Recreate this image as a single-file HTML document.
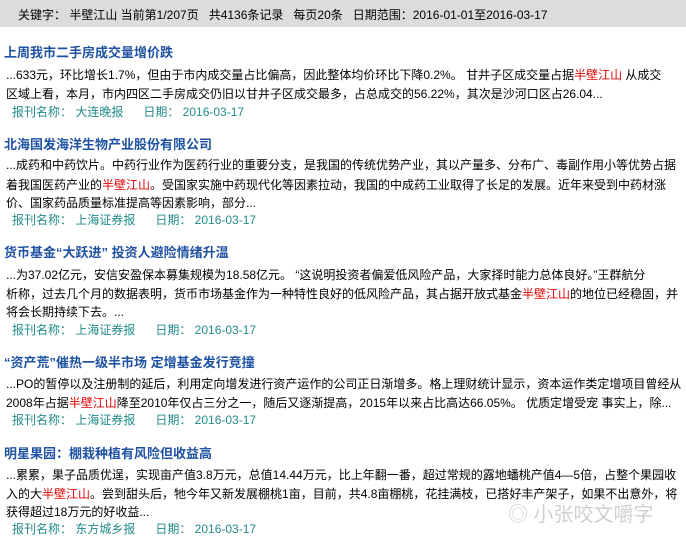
<!DOCTYPE html>
<html><head><meta charset="utf-8"><style>
body{margin:0;width:686px;height:536px;overflow:hidden;background:#fff;font-family:"Liberation Sans","Noto Sans CJK SC",sans-serif;font-size:12px;color:#000;position:relative}
.hd{position:absolute;left:0;top:0;width:686px;height:27px;background:#dcdcdc;}
.hd span{position:absolute;top:6px;white-space:nowrap}
.t{position:absolute;left:4px;font-size:13px;font-weight:bold;color:#1f52a3;white-space:nowrap}
.l{position:absolute;left:6px;white-space:nowrap;line-height:14px}
.m{position:absolute;left:12px;color:#238b8b;white-space:nowrap}
.r{color:#d00}
.wm{position:absolute;left:508px;top:498px;color:#ccc;font-size:20px;white-space:nowrap;opacity:.9}
</style></head><body>
<div class="hd"><span style="left:18px">关键字：&nbsp;半壁江山&nbsp;当前第1/207页&nbsp;&nbsp;&nbsp;共4136条记录&nbsp;&nbsp;&nbsp;每页20条&nbsp;&nbsp;&nbsp;日期范围：2016-01-01至2016-03-17</span></div>

<div class="t" style="top:42px">上周我市二手房成交量增价跌</div>
<div class="l" style="top:68px">...633元，环比增长1.7%，但由于市内成交量占比偏高，因此整体均价环比下降0.2%。 甘井子区成交量占据<span class="r">半壁江山</span> 从成交</div>
<div class="l" style="top:87px">区域上看，本月，市内四区二手房成交仍旧以甘井子区成交最多，占总成交的56.22%，其次是沙河口区占26.04...</div>
<div class="m" style="top:103px">报刊名称：&nbsp;大连晚报&nbsp;&nbsp;&nbsp;&nbsp;&nbsp;&nbsp;日期：&nbsp;2016-03-17</div>

<div class="t" style="top:134px">北海国发海洋生物产业股份有限公司</div>
<div class="l" style="top:158px">...成药和中药饮片。中药行业作为医药行业的重要分支，是我国的传统优势产业，其以产量多、分布广、毒副作用小等优势占据</div>
<div class="l" style="top:178px">着我国医药产业的<span class="r">半壁江山</span>。受国家实施中药现代化等因素拉动，我国的中成药工业取得了长足的发展。近年来受到中药材涨</div>
<div class="l" style="top:196px">价、国家药品质量标准提高等因素影响，部分...</div>
<div class="m" style="top:211px">报刊名称：&nbsp;上海证券报&nbsp;&nbsp;&nbsp;&nbsp;&nbsp;&nbsp;日期：&nbsp;2016-03-17</div>

<div class="t" style="top:242px">货币基金“大跃进” 投资人避险情绪升温</div>
<div class="l" style="top:268px">...为37.02亿元，安信安盈保本募集规模为18.58亿元。 “这说明投资者偏爱低风险产品，大家择时能力总体良好。”王群航分</div>
<div class="l" style="top:287px">析称，过去几个月的数据表明，货币市场基金作为一种特性良好的低风险产品，其占据开放式基金<span class="r">半壁江山</span>的地位已经稳固，并</div>
<div class="l" style="top:305px">将会长期持续下去。...</div>
<div class="m" style="top:321px">报刊名称：&nbsp;上海证券报&nbsp;&nbsp;&nbsp;&nbsp;&nbsp;&nbsp;日期：&nbsp;2016-03-17</div>

<div class="t" style="top:352px">“资产荒”催热一级半市场 定增基金发行竞撞</div>
<div class="l" style="top:377px">...PO的暂停以及注册制的延后，利用定向增发进行资产运作的公司正日渐增多。格上理财统计显示，资本运作类定增项目曾经从</div>
<div class="l" style="top:396px">2008年占据<span class="r">半壁江山</span>降至2010年仅占三分之一，随后又逐渐提高，2015年以来占比高达66.05%。 优质定增受宠 事实上，除...</div>
<div class="m" style="top:411px">报刊名称：&nbsp;上海证券报&nbsp;&nbsp;&nbsp;&nbsp;&nbsp;&nbsp;日期：&nbsp;2016-03-17</div>

<div class="t" style="top:443px">明星果园：棚栽种植有风险但收益高</div>
<div class="l" style="top:468px">...累累，果子品质优逞，实现亩产值3.8万元，总值14.44万元，比上年翻一番，超过常规的露地蟠桃产值4—5倍，占整个果园收</div>
<div class="l" style="top:487px">入的大<span class="r">半壁江山</span>。尝到甜头后，牠今年又新发展棚桃1亩，目前，共4.8亩棚桃，花挂满枝，已搭好丰产架子，如果不出意外，将</div>
<div class="l" style="top:505px">获得超过18万元的好收益...</div>
<div class="m" style="top:520px">报刊名称：&nbsp;东方城乡报&nbsp;&nbsp;&nbsp;&nbsp;&nbsp;&nbsp;日期：&nbsp;2016-03-17</div>

<div class="wm">◎ 小张咬文嚼字</div>
</body></html>
